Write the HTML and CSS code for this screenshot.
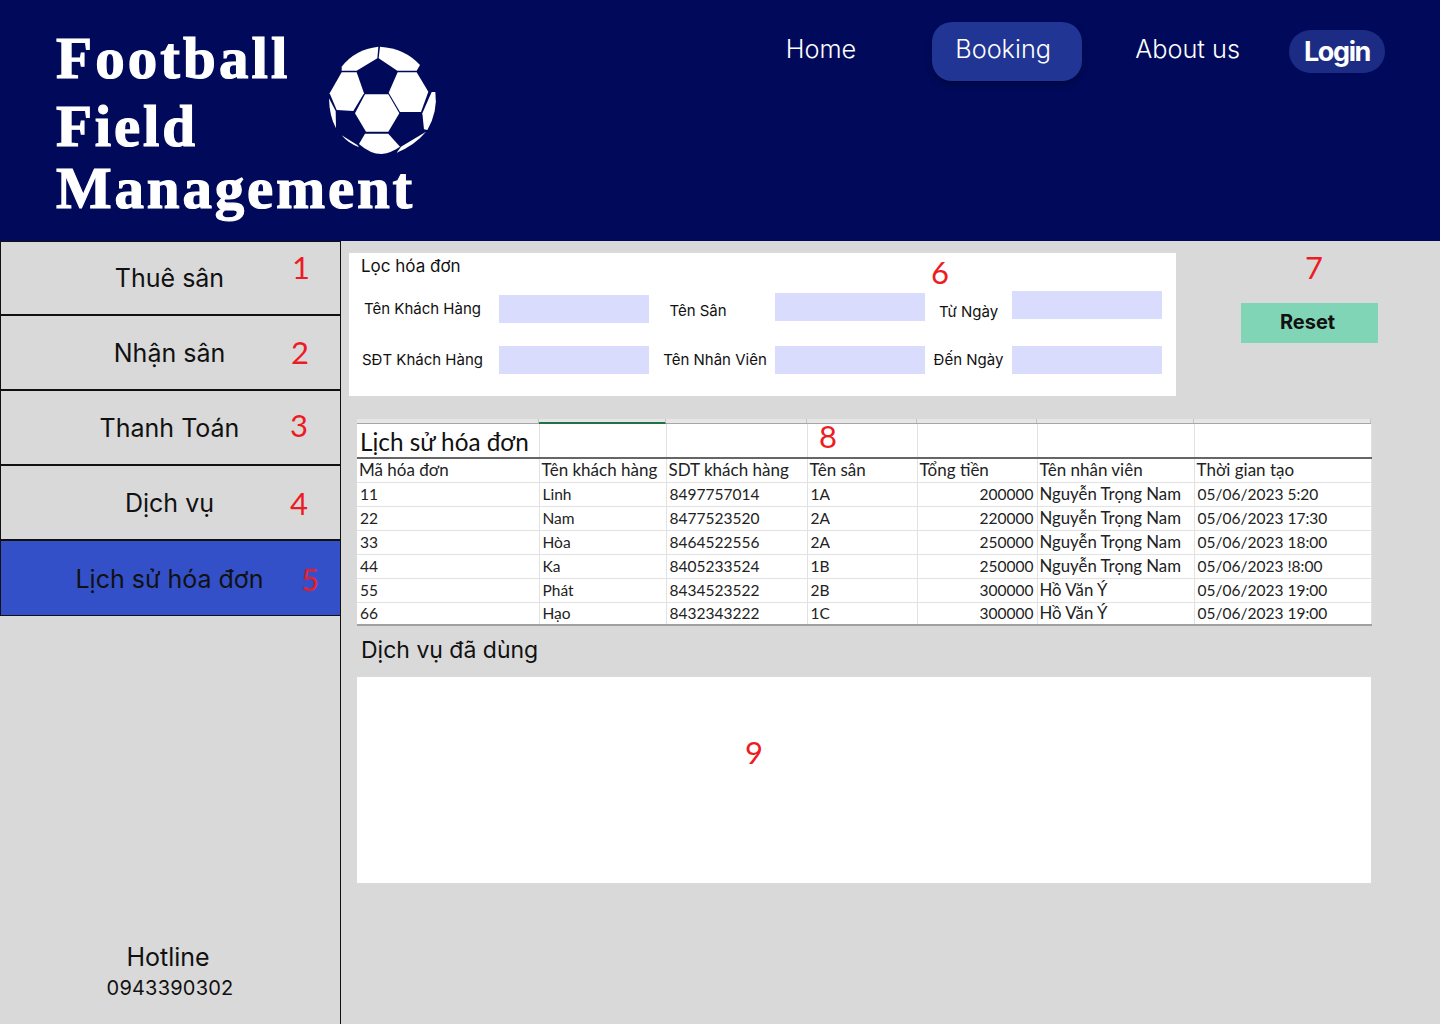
FILE: index.html
```html
<!DOCTYPE html>
<html lang="en">
<head>
    <meta charset="UTF-8">
    <meta name="viewport" content="width=device-width, initial-scale=1.0">
    <title>Football Field Management</title>
    <link rel="stylesheet" href="styles.css">
</head>
<body>
    <header class="header">
        <h1 class="logo-title">
            <span class="logo-line logo-line-first">Football</span>
            <span class="logo-line">Field</span>
            <span class="logo-line logo-line-last">Management</span>
        </h1>
        <svg class="logo-ball" viewBox="0 0 390 405" width="130" height="135" fill="#fff">
            <path d="M175 50 Q105 58 65 110 L65 122 L110 122 L172 85 Z"/>
            <path d="M180 50 Q255 55 300 105 L290 122 L232 122 L176 85 Z"/>
            <path d="M65 127 L110 127 L132 190 L100 243 L50 240 L29 190 Z"/>
            <path d="M233 127 L290 127 L325 185 L303 246 L240 246 L206 188 Z"/>
            <path d="M135 193 L205 193 L238 250 L205 305 L138 305 L105 250 Z"/>
            <path d="M135 311 L205 311 L240 350 Q215 368 185 372 Q150 372 117 342 Z"/>
            <path d="M335 186 L346 186 Q354 245 322 300 L312 298 L307 250 Z"/>
            <path d="M27 205 L47 243 L48 295 Q28 258 27 205 Z"/>
            <path d="M65 316 L112 345 L117 352 Q85 340 65 316 Z"/>
            <path d="M318 305 Q285 345 230 368 L243 350 Z"/>
        </svg>
        <nav class="nav">
            <a class="nav-link" href="#">Home</a>
            <a class="nav-link nav-active" href="#">Booking</a>
            <a class="nav-link nav-about" href="#">About us</a>
            <a class="nav-login" href="#">Login</a>
        </nav>
    </header>

    <div class="page">
        <aside class="sidebar">
            <a class="side-item" href="#">Thuê sân<span class="mark mark-1">1</span></a>
            <a class="side-item" href="#">Nhận sân<span class="mark mark-2">2</span></a>
            <a class="side-item" href="#">Thanh Toán<span class="mark mark-3">3</span></a>
            <a class="side-item" href="#">Dịch vụ<span class="mark mark-4">4</span></a>
            <a class="side-item side-active" href="#">Lịch sử hóa đơn<span class="mark mark-5">5</span></a>
            <div class="hotline">
                <div class="hotline-title">Hotline</div>
                <div class="hotline-phone">0943390302</div>
            </div>
        </aside>

        <main class="main">
            <section class="top-row">
                <form class="filter">
                    <span class="mark mark-6">6</span>
                    <div class="filter-title">Lọc hóa đơn</div>
                    <div class="filter-grid">
                        <label class="filter-label drop-4 nudge-left">Tên Khách Hàng</label>
                        <input class="filter-input drop-4" type="text">
                        <label class="filter-label drop-6 shift-left">Tên Sân</label>
                        <input class="filter-input drop-2" type="text">
                        <label class="filter-label drop-7">Từ Ngày</label>
                        <input class="filter-input" type="text">
                        <label class="filter-label nudge-left">SĐT Khách Hàng</label>
                        <input class="filter-input" type="text">
                        <label class="filter-label shift-right">Tên Nhân Viên</label>
                        <input class="filter-input" type="text">
                        <label class="filter-label">Đến Ngày</label>
                        <input class="filter-input" type="text">
                    </div>
                </form>
                <div class="reset-box">
                    <span class="mark mark-7">7</span>
                    <button class="reset-button" type="button">Reset</button>
                </div>
            </section>

            <section class="sheet">
                <span class="mark mark-8">8</span>
                <div class="sheet-strip">
                    <span class="strip-cell strip-a"></span>
                    <span class="strip-cell strip-b"></span>
                    <span class="strip-cell strip-c"></span>
                    <span class="strip-cell strip-d"></span>
                    <span class="strip-cell strip-e"></span>
                    <span class="strip-cell strip-f"></span>
                    <span class="strip-cell strip-g"></span>
                </div>
                <table class="sheet-table">
                    <colgroup>
                        <col class="col-a"><col class="col-b"><col class="col-c"><col class="col-d"><col class="col-e"><col class="col-f"><col class="col-g">
                    </colgroup>
                    <thead>
                        <tr class="sheet-title-row">
                            <th class="sheet-title">Lịch sử hóa đơn</th><th></th><th></th><th></th><th></th><th></th><th></th>
                        </tr>
                        <tr class="sheet-head-row">
                            <th>Mã hóa đơn</th><th>Tên khách hàng</th><th>SDT khách hàng</th><th>Tên sân</th><th>Tổng tiền</th><th>Tên nhân viên</th><th>Thời gian tạo</th>
                        </tr>
                    </thead>
                    <tbody>
                        <tr><td>11</td><td>Linh</td><td>8497757014</td><td>1A</td><td class="num">200000</td><td>Nguyễn Trọng Nam</td><td>05/06/2023 5:20</td></tr>
                        <tr><td>22</td><td>Nam</td><td>8477523520</td><td>2A</td><td class="num">220000</td><td>Nguyễn Trọng Nam</td><td>05/06/2023 17:30</td></tr>
                        <tr><td>33</td><td>Hòa</td><td>8464522556</td><td>2A</td><td class="num">250000</td><td>Nguyễn Trọng Nam</td><td>05/06/2023 18:00</td></tr>
                        <tr><td>44</td><td>Ka</td><td>8405233524</td><td>1B</td><td class="num">250000</td><td>Nguyễn Trọng Nam</td><td>05/06/2023 !8:00</td></tr>
                        <tr><td>55</td><td>Phát</td><td>8434523522</td><td>2B</td><td class="num">300000</td><td>Hồ Văn Ý</td><td>05/06/2023 19:00</td></tr>
                        <tr><td>66</td><td>Hạo</td><td>8432343222</td><td>1C</td><td class="num">300000</td><td>Hồ Văn Ý</td><td>05/06/2023 19:00</td></tr>
                    </tbody>
                </table>
            </section>

            <h2 class="used-title">Dịch vụ đã dùng</h2>
            <section class="used-box">
                <span class="mark mark-9">9</span>
            </section>
        </main>
    </div>
</body>
</html>
```

FILE: styles.css
```css
* {
    box-sizing: border-box;
}

body {
    margin: 0;
    width: 1440px;
    height: 1024px;
    overflow: hidden;
    background-color: #d9d9d9;
    color: #111;
    font-family: Inter, "Liberation Sans", sans-serif;
}

a {
    color: inherit;
    text-decoration: none;
}

/* Header */
.header {
    display: flex;
    height: 241px;
    padding: 24px 55px 0 56px;
    background-color: #010a5a;
    color: #fff;
}

.logo-title {
    width: 264px;
    margin: 0;
    font-family: "Liberation Serif", serif;
    font-size: 59px;
    font-weight: 700;
    letter-spacing: 2.8px;
    white-space: nowrap;
    -webkit-text-stroke: 1.2px #fff;
}

.logo-line {
    display: block;
    line-height: 68px;
}

.logo-line-first {
    letter-spacing: 3.1px;
}

.logo-line-last {
    line-height: 56px;
}

.logo-ball {
    margin-top: 6px;
}

.nav {
    display: flex;
    align-items: center;
    height: 59px;
    margin-top: -2px;
    margin-left: auto;
}

.nav-link {
    font-size: 25.3px;
    font-weight: 300;
    line-height: 30px;
    padding-bottom: 5px;
}

.nav-active {
    width: 150px;
    height: 59px;
    margin-left: 76px;
    padding: 12px 0 0 23px;
    border-radius: 20px;
    background-color: #203594;
    box-shadow: 0 4px 6px rgba(0, 0, 0, 0.25);
}

.nav-about {
    margin-left: 53px;
}

.nav-login {
    height: 43px;
    margin-left: 49px;
    padding: 0 15px;
    border-radius: 22px;
    background-color: #1c2c85;
    font-size: 27px;
    font-weight: 700;
    letter-spacing: -1.4px;
    line-height: 43px;
}

/* Sidebar */
.page {
    display: flex;
    height: 783px;
}

.sidebar {
    display: flex;
    flex-direction: column;
    flex: none;
    width: 341px;
    border-right: 1px solid #111;
}

.side-item {
    position: relative;
    display: flex;
    align-items: center;
    justify-content: center;
    height: 75px;
    padding-right: 2px;
    border-left: 1px solid #111;
    border-bottom: 2px solid #111;
    font-size: 25px;
}

.side-item:first-child {
    border-top: 1px solid #111;
}

.side-active {
    padding-top: 2px;
    background-color: #3350c8;
    border-bottom-width: 1px;
}

.hotline {
    margin-top: auto;
    padding-bottom: 21px;
    text-align: center;
}

.hotline-title {
    padding-right: 4px;
    font-size: 25px;
    line-height: 32px;
}

.hotline-phone {
    font-size: 20px;
    line-height: 30px;
    letter-spacing: 0.2px;
}

/* Red annotation numbers */
.mark {
    position: absolute;
    color: #ed1c24;
    font-family: Lato, "Open Sans", sans-serif;
    font-size: 31px;
    line-height: 32px;
}

.mark-1 { left: 291px; top: 9px; }
.mark-2 { left: 290px; top: 20px; }
.mark-3 { left: 289px; top: 18px; }
.mark-4 { left: 289px; top: 21px; }
.mark-5 { left: 300px; top: 22px; }
.mark-6 { left: 582px; top: 3px; }
.mark-7 { left: 129px; top: -2px; }
.mark-8 { left: 462px; top: 1px; }
.mark-9 { left: 388px; top: 59px; }

/* Main area */
.main {
    flex: 1;
    min-width: 0;
    padding: 12px 0 0 8px;
}

.top-row {
    display: flex;
}

.filter {
    position: relative;
    width: 827px;
    height: 143px;
    background-color: #fff;
}

.filter-title {
    padding-left: 12px;
    font-size: 17px;
    line-height: 26px;
}

.filter-grid {
    display: grid;
    grid-template-columns: 150px 150px 126px 150px 87px 150px;
    grid-template-rows: 32px 28px;
    row-gap: 23px;
    margin-top: 12px;
}

.filter-label {
    font-size: 15px;
    line-height: 28px;
    text-align: center;
    white-space: nowrap;
}

.filter-input {
    height: 28px;
    padding: 0;
    border: none;
    background-color: #d9dcfc;
}

.drop-2 { margin-top: 2px; }
.drop-4 { margin-top: 4px; }
.drop-6 { margin-top: 6px; }
.drop-7 { margin-top: 7px; }
.shift-left { padding-right: 28px; }
.shift-right { padding-left: 6px; }
.nudge-left { padding-right: 3px; }

.reset-box {
    position: relative;
    padding: 50px 0 0 65px;
}

.reset-button {
    display: block;
    width: 137px;
    height: 40px;
    padding: 0 4px 2px 0;
    border: none;
    background-color: #81d5b7;
    color: #111;
    font-family: Inter, "Liberation Sans", sans-serif;
    font-size: 20px;
    font-weight: 700;
}

/* Spreadsheet picture */
.sheet {
    position: relative;
    width: 1014px;
    margin: 23px 0 0 8px;
    background-color: #fff;
    font-family: Lato, "Open Sans", sans-serif;
}

.sheet-strip {
    display: grid;
    grid-template-columns: 182px 127px 141px 110px 120px 157px 177px;
    height: 5px;
    background-color: #e6e6e6;
    border-bottom: 1px solid #a6a6a6;
}

.strip-cell {
    border-right: 1px solid #c4c4c4;
}

.strip-b {
    border-bottom: 2px solid #217346;
    margin-bottom: -1px;
}

.sheet-table {
    width: 1014px;
    table-layout: fixed;
    border-collapse: collapse;
    color: #222;
    font-size: 15.5px;
}

.col-a { width: 182px; }
.col-b { width: 127px; }
.col-c { width: 141px; }
.col-d { width: 110px; }
.col-e { width: 120px; }
.col-f { width: 157px; }
.col-g { width: 177px; }

.sheet-table th,
.sheet-table td {
    height: 24px;
    padding: 0 3px;
    border-right: 1px solid #e2e2e2;
    border-bottom: 1px solid #e2e2e2;
    font-weight: 400;
    line-height: 20px;
    text-align: left;
    white-space: nowrap;
}

.sheet-table .sheet-title-row th {
    height: 34px;
    border-bottom: 2px solid #666;
    padding-top: 3px;
}

.sheet-table .sheet-title {
    padding-left: 3px;
    font-size: 24.3px;
    color: #111;
}

.sheet-table .sheet-head-row th {
    padding-left: 2px;
    font-size: 17px;
}

.sheet-table td:nth-child(6) {
    padding-left: 2px;
    font-size: 16.8px;
}

.sheet-table .num {
    text-align: right;
}

.sheet-table tbody tr:last-child td {
    height: 23px;
    border-bottom: 2px solid #a0a0a0;
}

.used-title {
    margin: 9px 0 0 12px;
    font-size: 23px;
    font-weight: 400;
    line-height: 30px;
}

.used-box {
    position: relative;
    width: 1014px;
    height: 206px;
    margin: 12px 0 0 8px;
    background-color: #fff;
}
```
